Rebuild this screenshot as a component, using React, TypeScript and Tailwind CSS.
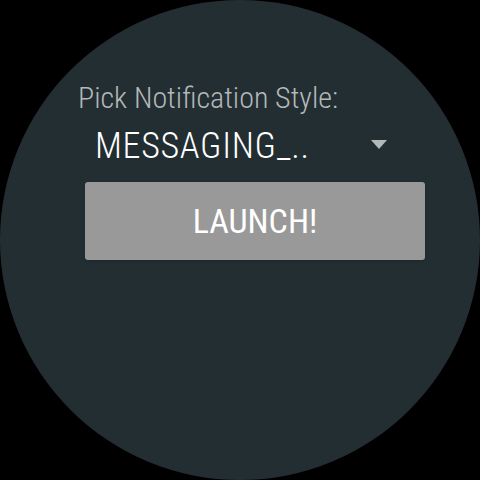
export default function App() {
  return (
    <div className="w-[480px] h-[480px] bg-black overflow-hidden" style={{ fontFamily: "Roboto, sans-serif" }}>
      <div className="w-[480px] h-[480px] rounded-full bg-[#232e33] flex flex-col pl-[78px] pt-[82px]">
        <div className="text-[30px] leading-[32px] font-light text-[#b3b8ba] [font-stretch:condensed]">
          Pick Notification Style:
        </div>
        <div className="flex items-start w-[320px] pl-[17px] mt-[9px] h-[49px]">
          <span className="text-[36px] leading-[46px] font-light text-white tracking-[0.7px] [font-stretch:condensed]">MESSAGING_..</span>
          <svg className="ml-auto mr-[11px] mt-[17px]" width="16" height="9" viewBox="0 0 16 9">
            <polygon points="0,0 16,0 8,9" fill="#b3b8ba" />
          </svg>
        </div>
        <button className="ml-[7px] mt-[10px] w-[340px] h-[78px] rounded-[3px] bg-[#999999] text-white text-[34px] [font-stretch:condensed] shadow-sm">
          LAUNCH!
        </button>
      </div>
    </div>
  );
}
